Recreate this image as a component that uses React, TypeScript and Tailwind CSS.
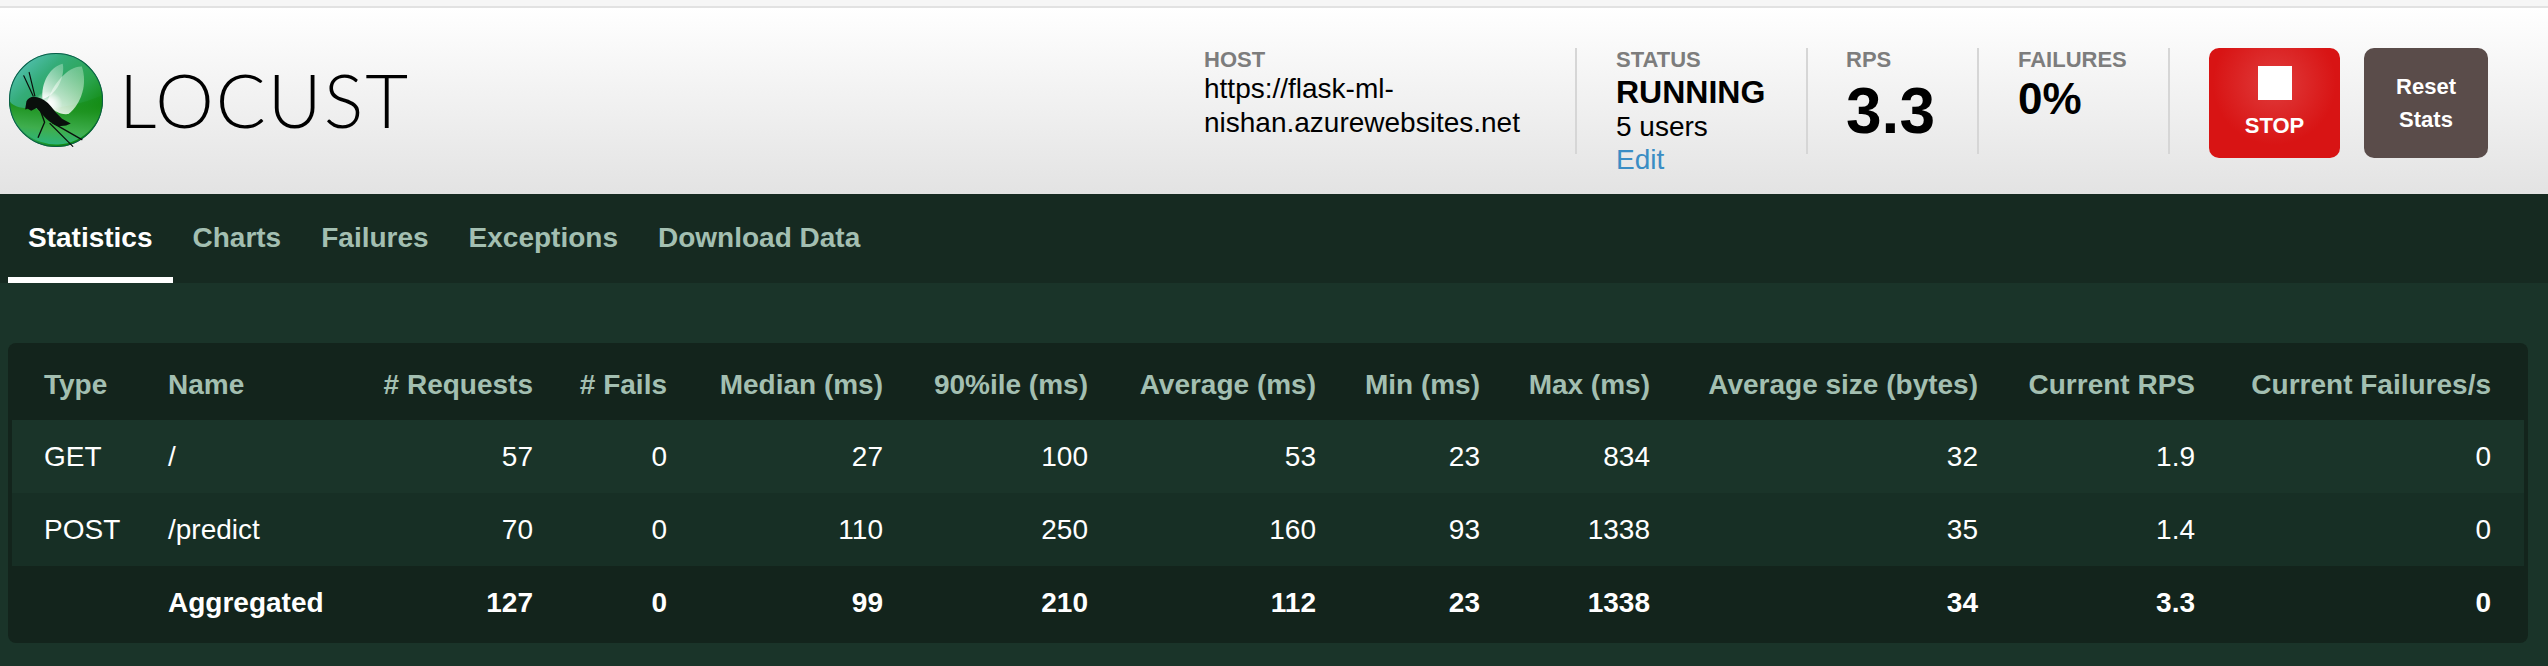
const tabs = ["Statistics", "Charts", "Failures", "Exceptions", "Download Data"];

const rows = [
  { type: "GET", name: "/", values: ["57", "0", "27", "100", "53", "23", "834", "32", "1.9", "0"], bg: "bg-[#1a3429]" },
  { type: "POST", name: "/predict", values: ["70", "0", "110", "250", "160", "93", "1338", "35", "1.4", "0"], bg: "bg-[#172f25]" },
];

const totals = ["127", "0", "99", "210", "112", "23", "1338", "34", "3.3", "0"];

const LocustLogo = () => (
  <svg viewBox="28 40 280 280" className="size-[94px] shrink-0">
    <defs>
      <linearGradient id="top" x1="0.1" y1="0" x2="0.8" y2="0.75">
        <stop offset="0%" stopColor="#5cc6c2" />
        <stop offset="35%" stopColor="#34ac78" />
        <stop offset="70%" stopColor="#2aa44e" />
        <stop offset="100%" stopColor="#118a10" />
      </linearGradient>
      <linearGradient id="bottom" x1="0.6" y1="0" x2="0.4" y2="1">
        <stop offset="0%" stopColor="#128a10" stopOpacity="0.35" />
        <stop offset="30%" stopColor="#1f9422" />
        <stop offset="70%" stopColor="#3fae4e" />
        <stop offset="100%" stopColor="#2bb57e" />
      </linearGradient>
      <radialGradient id="glow" cx="50%" cy="50%" r="50%">
        <stop offset="0%" stopColor="#ffffff" />
        <stop offset="40%" stopColor="#ffffff" stopOpacity="0.75" />
        <stop offset="100%" stopColor="#ffffff" stopOpacity="0" />
      </radialGradient>
      <linearGradient id="wing" x1="0.7" y1="0" x2="0.2" y2="1">
        <stop offset="0%" stopColor="#cdeed6" stopOpacity="0.4" />
        <stop offset="100%" stopColor="#ffffff" stopOpacity="0.9" />
      </linearGradient>
    </defs>
    <circle cx="168" cy="180" r="140" fill="url(#top)" />
    <path d="M28 180 Q40 205 90 205 Q200 212 308 165 A140 140 0 0 1 28 180Z" fill="url(#bottom)" />
    <circle cx="168" cy="180" r="138.5" fill="none" stroke="#0a5c48" strokeWidth="3" />
    <path d="M128 178 C122 130 150 80 188 72 C196 110 170 165 128 178Z" fill="url(#wing)" />
    <path d="M140 190 C158 130 205 78 245 80 C262 130 245 190 205 222 C180 225 160 212 140 190Z" fill="url(#wing)" />
    <ellipse cx="145" cy="190" rx="42" ry="36" fill="url(#glow)" />
    <g stroke="#0a0f0c" fill="none" strokeLinecap="round">
      <path d="M100 168 L72 108" strokeWidth="3.5" />
      <path d="M105 168 L88 98" strokeWidth="3.5" />
      <path d="M122 212 L134 246 L115 291" strokeWidth="4" />
      <path d="M158 248 L245 298" strokeWidth="4" />
      <path d="M150 250 L218 318" strokeWidth="3.5" />
    </g>
    <path
      d="M76 208 L80 184 Q90 166 112 172 Q136 178 152 198 Q170 222 186 236 L212 250 L198 256 L176 258 Q150 250 130 226 L110 204 L94 212 L84 206Z"
      fill="#0a0f0c"
    />
  </svg>
);

const Stat = ({ label, className, children }: { label: string; className: string; children: React.ReactNode }) => (
  <div className={`h-[106px] border-r-2 border-[#d6d6d6] ${className}`}>
    <div className="text-[22px] leading-[24px] font-bold text-[#7d7d7d]">{label}</div>
    {children}
  </div>
);

export default function App() {
  return (
    <div className="min-h-[666px] bg-[#1a3429] font-['Liberation_Sans',Arial,sans-serif]">
      <div className="h-2 border-b-2 border-[#e2e2e2] bg-[#f6f6f6]" />
      <header className="flex h-[186px] bg-gradient-to-b from-white to-[#e3e3e3] pr-[60px] text-black">
        <div className="ml-[9px] flex h-[184px] items-center gap-[16px]">
          <LocustLogo />
          <span className="font-['Lato',sans-serif] text-[74px] leading-none font-light tracking-[2px]">LOCUST</span>
        </div>
        <div className="ml-auto flex items-start pt-[40px]">
          <Stat label="HOST" className="w-[373px]">
            <div className="w-[340px] text-[28px] leading-[34px]">https://flask-ml-nishan.azurewebsites.net</div>
          </Stat>
          <Stat label="STATUS" className="w-[231px] pl-[39px]">
            <div className="text-[32px] leading-[40px] font-bold">RUNNING</div>
            <div className="text-[28px] leading-[30px]">5 users</div>
            <a className="block text-[28px] leading-[36px] text-[#3a8dc4]">Edit</a>
          </Stat>
          <Stat label="RPS" className="w-[171px] pl-[38px]">
            <div className="text-[64px] leading-[78px] font-bold">3.3</div>
          </Stat>
          <Stat label="FAILURES" className="w-[191px] pl-[39px]">
            <div className="text-[44px] leading-[54px] font-bold">0%</div>
          </Stat>
          <button className="ml-[39px] flex h-[110px] w-[131px] flex-col items-center rounded-[10px] bg-[radial-gradient(circle_at_50%_32%,#e03c3c_0%,#d81414_62%)] pt-[18px] text-[22px] leading-[24px] font-bold text-white">
            <span className="size-[34px] bg-white" />
            <span className="mt-[14px]">STOP</span>
          </button>
          <button className="ml-[24px] h-[110px] w-[124px] rounded-[10px] bg-[#5a4c4a] text-[22px] leading-[33px] font-bold text-white">
            Reset
            <br />
            Stats
          </button>
        </div>
      </header>
      <nav className="flex h-[89px] bg-[#162a21] pl-2 text-[28px] leading-[34px] font-bold text-[#a3bfb1]">
        {tabs.map((tab, i) => (
          <div
            key={tab}
            className={i === 0 ? "border-b-[6px] border-white px-5 pt-[27px] text-white" : "px-5 pt-[27px]"}
          >
            {tab}
          </div>
        ))}
      </nav>
      <main className="pt-[60px] pr-5 pl-2">
        <div className="rounded-lg bg-[#13241c] px-1">
          <table className="w-full table-fixed text-right text-[28px] leading-[32px] whitespace-nowrap text-white">
            <thead className="font-bold text-[#a3bfb1]">
              <tr className="h-[77px]">
                <th className="w-[124px] pt-[6px] pl-8 text-left">Type</th>
                <th className="w-[204px] pt-[6px] pl-8 text-left">Name</th>
                <th className="w-[226px] pt-[6px] pr-[33px]"># Requests</th>
                <th className="w-[134px] pt-[6px] pr-[33px]"># Fails</th>
                <th className="w-[216px] pt-[6px] pr-[33px]">Median (ms)</th>
                <th className="w-[205px] pt-[6px] pr-[33px]">90%ile (ms)</th>
                <th className="w-[228px] pt-[6px] pr-[33px]">Average (ms)</th>
                <th className="w-[164px] pt-[6px] pr-[33px]">Min (ms)</th>
                <th className="w-[170px] pt-[6px] pr-[33px]">Max (ms)</th>
                <th className="w-[328px] pt-[6px] pr-[33px]">Average size (bytes)</th>
                <th className="w-[217px] pt-[6px] pr-[33px]">Current RPS</th>
                <th className="w-[296px] pt-[6px] pr-[33px]">Current Failures/s</th>
              </tr>
            </thead>
            <tbody>
              {rows.map((row) => (
                <tr key={row.type} className={`h-[73px] ${row.bg}`}>
                  <td className="pl-8 text-left">{row.type}</td>
                  <td className="pl-8 text-left">{row.name}</td>
                  {row.values.map((v, i) => (
                    <td key={i} className="pr-[33px]">{v}</td>
                  ))}
                </tr>
              ))}
              <tr className="h-[77px] font-bold">
                <td />
                <td className="pb-[3px] pl-8 text-left">Aggregated</td>
                {totals.map((v, i) => (
                  <td key={i} className="pr-[33px] pb-[3px]">{v}</td>
                ))}
              </tr>
            </tbody>
          </table>
        </div>
      </main>
    </div>
  );
}
